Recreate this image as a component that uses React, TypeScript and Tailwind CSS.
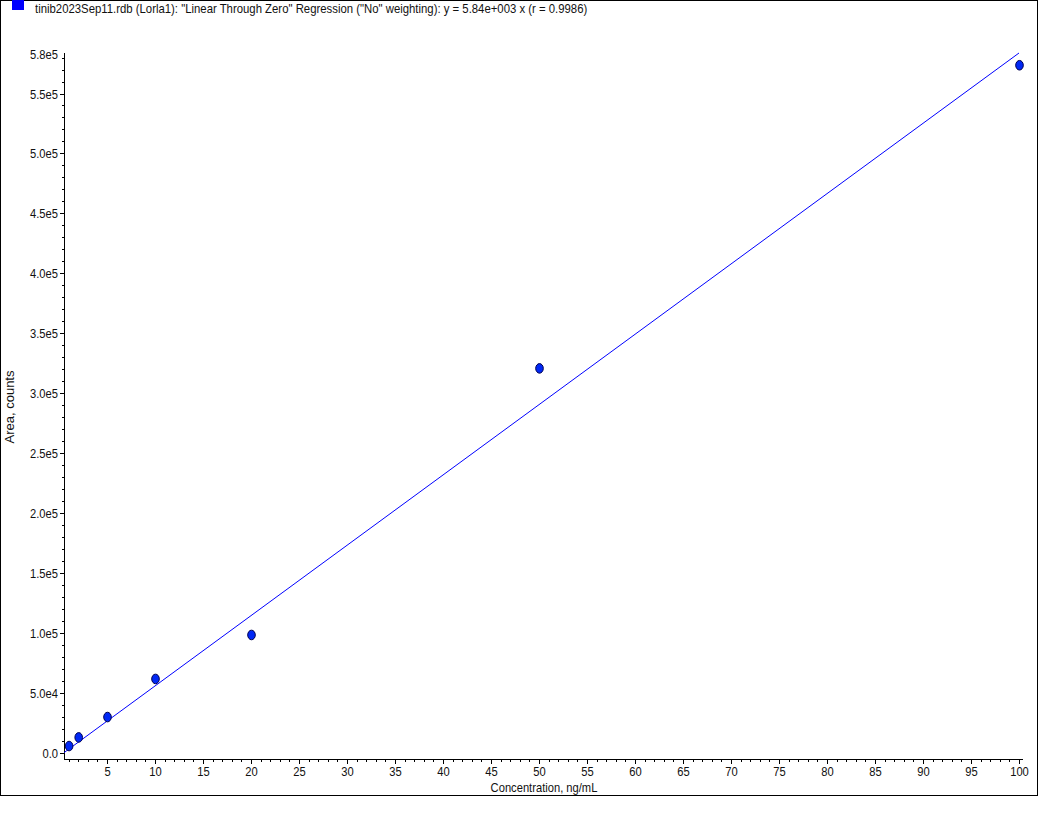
import React from "react";

const X0 = 59;
const XS = 9.6;
const Y0 = 753;
const YS = 659 / 550000;

const px = (x: number) => X0 + x * XS;
const py = (v: number) => Y0 - v * YS;

const points: [number, number][] = [
  [1, 5800],
  [2, 13000],
  [5, 30000],
  [10, 61800],
  [20, 98500],
  [50, 321000],
  [100, 574000],
];

const yLabels = ["0.0", "5.0e4", "1.0e5", "1.5e5", "2.0e5", "2.5e5", "3.0e5", "3.5e5", "4.0e5", "4.5e5", "5.0e5", "5.5e5"];

const Label = ({ x, y, anchor, children }: { x: number; y: number; anchor: "start" | "middle" | "end"; children: React.ReactNode }) => (
  <text transform={`translate(${x} ${y}) scale(0.86 1)`} textAnchor={anchor} fontSize={13} fill="#111">
    {children}
  </text>
);

const Chart = () => {
  const yTicks = [];
  for (let i = 0; i <= 58; i++) {
    const y = py(i * 10000);
    const major = i % 5 === 0;
    yTicks.push(<line key={"y" + i} x1={major ? 60 : 62} x2={64} y1={y} y2={y} stroke="#000" />);
  }
  const xTicks = [];
  for (let i = 1; i <= 100; i++) {
    const x = px(i) + 0.5;
    const major = i % 5 === 0;
    xTicks.push(<line key={"x" + i} x1={x} x2={x} y1={759} y2={major ? 764 : 761.5} stroke="#000" />);
  }
  return (
    <svg width={1036} height={778} viewBox="1 17 1036 778" className="block" shapeRendering="crispEdges" style={{ fontFamily: '"Liberation Sans", Arial, sans-serif' }}>
      <line x1={64.5} x2={64.5} y1={53} y2={760} stroke="#000" />
      <line x1={64} x2={1023} y1={759.5} y2={759.5} stroke="#000" />
      {yTicks}
      {xTicks}
      {yLabels.map((l, i) => (
        <Label key={l} x={58} y={py(i * 50000) + 4.5} anchor="end">{l}</Label>
      ))}
      <Label x={58} y={58.5} anchor="end">5.8e5</Label>
      {Array.from({ length: 20 }, (_, i) => (i + 1) * 5).map((v) => (
        <Label key={v} x={px(v) + 0.5} y={775.5} anchor="middle">{v}</Label>
      ))}
      <Label x={544} y={792} anchor="middle">Concentration, ng/mL</Label>
      <text transform="translate(13.5 407) rotate(-90)" textAnchor="middle" fontSize={13} fill="#111">
        Area, counts
      </text>
      <line x1={64} y1={py(292)} x2={1019} y2={53} stroke="#0000ff" shapeRendering="auto" />
      {points.map(([x, v]) => (
        <ellipse key={x} cx={px(x) + 0.5} cy={py(v)} rx={3.8} ry={4.8} fill="#0028f5" stroke="#000050" strokeWidth={1} shapeRendering="auto" />
      ))}
    </svg>
  );
};

export default function App() {
  return (
    <div className="w-[1055px] h-[817px] bg-white overflow-hidden">
      <div className="w-[1038px] h-[796px] border border-black flex flex-col bg-white">
        <div className="flex items-start h-[16px] overflow-visible">
          <div className="w-[12px] h-[10px] bg-[#0000ff] ml-[11px] -mt-px shrink-0" />
          <span className="ml-[11px] inline-block origin-left scale-x-[0.873] whitespace-nowrap text-[13px] leading-[16px] text-[#111] font-['Liberation_Sans',Arial,sans-serif]">
            tinib2023Sep11.rdb (Lorla1): "Linear Through Zero" Regression ("No" weighting): y = 5.84e+003 x (r = 0.9986)
          </span>
        </div>
        <Chart />
      </div>
    </div>
  );
}
